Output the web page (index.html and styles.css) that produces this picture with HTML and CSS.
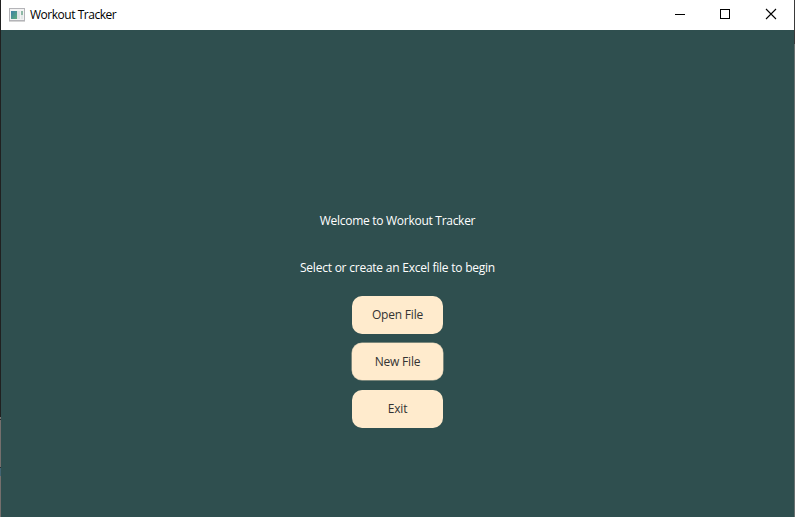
FILE: index.html
```html
<!DOCTYPE html>
<html lang="en">
<head>
<meta charset="utf-8">
<title>Workout Tracker</title>
<link rel="stylesheet" href="styles.css">
</head>
<body>
<div class="edge edge-left"></div>
<div class="window">
  <header class="titlebar">
    <svg class="app-icon" width="16" height="14" viewBox="0 0 16 14">
      <defs><linearGradient id="pane" x1="0" y1="0" x2="1" y2="1"><stop offset="0" stop-color="#3b7fa6"/><stop offset="1" stop-color="#60ad7c"/></linearGradient></defs>
      <rect x=".5" y=".5" width="15" height="12" fill="#f3f3f3" stroke="#b4b4b8"/>
      <path d="M0 13.5h16" stroke="#d5d5d5"/>
      <rect x="2" y="3" width="6" height="8" fill="url(#pane)"/>
      <rect x="8" y="3" width="3" height="8" fill="#dfe3e5"/>
      <rect x="12" y="3" width="2" height="4" fill="#8fb9a6"/>
      <rect x="12" y="7" width="2" height="4" fill="#e4e8e8"/>
    </svg>
    <span class="title">Workout Tracker</span>
    <div class="controls">
      <svg width="46" height="30" viewBox="0 0 46 30"><path d="M18 14.5h10" stroke="#000"/></svg>
      <svg width="45" height="30" viewBox="0 0 45 30"><rect x="17.5" y="9.5" width="9" height="9" fill="none" stroke="#000"/></svg>
      <svg width="46" height="30" viewBox="0 0 46 30"><path d="M18 9l10 10M28 9l-10 10" stroke="#000" stroke-width="1.1"/></svg>
    </div>
  </header>
  <main class="content">
    <p class="welcome">Welcome to Workout Tracker</p>
    <p class="prompt">Select or create an Excel file to begin</p>
    <div class="actions">
      <button class="button">Open File</button>
      <button class="button focused">New File</button>
      <button class="button">Exit</button>
    </div>
  </main>
</div>
<div class="edge edge-right"></div>
</body>
</html>
```
FILE: styles.css
```css
* { box-sizing: border-box; }
body {
  margin: 0;
  height: 517px;
  display: flex;
  overflow: hidden;
  font: 12px/16px "Open Sans", "Noto Sans", sans-serif;
}
.edge { width: 1px; flex: none; }
.edge-left { background: linear-gradient(#202020 417px, #756f6d 417px 419px, #2b2929 419px 420px, #756f6d 420px 467px, #263238 467px 468px, #426472 468px 476px, #756f6d 476px); }
.edge-right { background: linear-gradient(#3a3a3a 44px, #68706f 44px); }
.window { flex: 1; display: flex; flex-direction: column; background: #2f4f4f; }
.titlebar {
  height: 30px;
  flex: none;
  display: flex;
  align-items: center;
  padding-left: 8px;
  background: #fff;
  color: #000;
}
.app-icon { margin-right: 5px; }
.title { letter-spacing: -0.48px; }
.controls { display: flex; margin-left: auto; }
.content {
  flex: 1;
  display: flex;
  flex-direction: column;
  align-items: center;
  padding-top: 183px;
  color: #fff;
}
p { margin: 0; white-space: nowrap; }
.welcome { margin-bottom: 31px; letter-spacing: -0.28px; }
.prompt { margin-bottom: 20px; letter-spacing: -0.23px; }
.actions { display: flex; flex-direction: column; gap: 9px; }
.button {
  width: 91px;
  height: 38px;
  padding: 0;
  border: 0;
  border-radius: 10px;
  background: #ffebcd;
  color: #333;
  font: inherit;
  letter-spacing: -0.2px;
}
.focused { height: 37px; margin-bottom: 1px; box-shadow: 0 0 0 0.5px #c8bfa8; }
```
